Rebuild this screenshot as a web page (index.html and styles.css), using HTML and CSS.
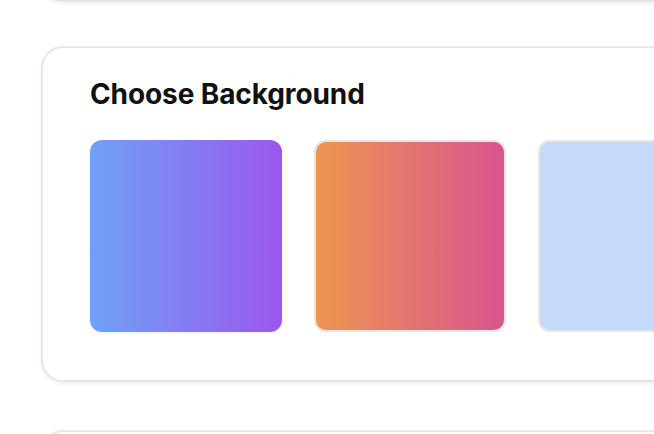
FILE: index.html
```html
<!DOCTYPE html>
<html>
<head>
<meta charset="utf-8">
<link rel="stylesheet" href="styles.css">
</head>
<body>
<div class="viewport">
  <div class="page">
    <div class="card card-prev"></div>
    <section class="card">
      <h2 class="title">Choose Background</h2>
      <div class="swatches">
        <div class="swatch swatch-blue-purple"></div>
        <div class="swatch swatch-orange-pink"></div>
        <div class="swatch swatch-light-blue"></div>
      </div>
    </section>
    <div class="card card-next"></div>
  </div>
</div>
</body>
</html>
```
FILE: styles.css
```css
html, body {
  margin: 0;
  padding: 0;
  background: #ffffff;
}
.viewport {
  width: 654px;
  height: 434px;
  overflow: hidden;
}
.page {
  display: flex;
  flex-direction: column;
  gap: 44px;
  padding-left: 41px;
  margin-top: -100px;
  font-family: Inter, "Noto Sans", sans-serif;
}
.card {
  width: 760px;
  flex: none;
  box-sizing: border-box;
  border: 2px solid #e6e6e6;
  border-radius: 22px;
  background: #fff;
  box-shadow: 0 2px 4px rgba(0, 0, 0, 0.06);
  padding: 28px 47px 48px 47px;
}
.card-prev {
  height: 102px;
}
.card-next {
  height: 100px;
  margin-top: 4px;
}
.title {
  margin: 0;
  font-size: 28px;
  line-height: 36px;
  font-weight: 700;
  color: #111111;
  letter-spacing: -0.1px;
}
.swatches {
  display: flex;
  gap: 32px;
  margin-top: 28px;
}
.swatch {
  width: 192px;
  height: 192px;
  box-sizing: border-box;
  border-radius: 12px;
  border: 2px solid #e5e5e5;
  flex: none;
}
.swatch-blue-purple {
  border-color: transparent;
  background: linear-gradient(90deg, #6ea2f6, #9b57ee) border-box;
  box-shadow: 0 1px 3px rgba(0, 0, 0, 0.08);
}
.swatch-orange-pink {
  background: linear-gradient(90deg, #ee9650, #d9548f);
}
.swatch-light-blue {
  background: #c4daf8;
}
```
